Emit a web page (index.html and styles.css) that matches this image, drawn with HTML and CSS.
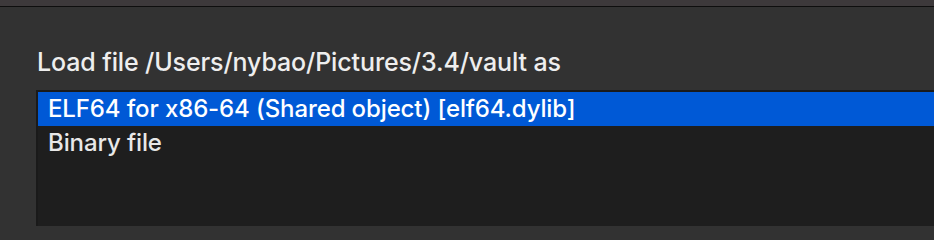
FILE: index.html
```html
<!DOCTYPE html>
<html>
<head>
<meta charset="utf-8">
<link rel="stylesheet" href="styles.css">
</head>
<body>
<div class="titlebar"></div>
<div class="panel">
  <div class="prompt">Load file /Users/nybao/Pictures/3.4/vault as</div>
  <div class="list">
    <div class="row selected">ELF64 for x86-64 (Shared object) [elf64.dylib]</div>
    <div class="row">Binary file</div>
  </div>
</div>
</body>
</html>
```

FILE: styles.css
```css
html, body {
  margin: 0;
  padding: 0;
  width: 934px;
  height: 228px;
  overflow: hidden;
  background: #323232;
  font-family: Inter, "Noto Sans", sans-serif;
  color: #ececec;
}
.titlebar {
  height: 6px;
  background: #3d393b;
  border-bottom: 1px solid #0e0e0e;
}
.panel {
  padding: 40px 0 0 37px;
}
.prompt {
  font-size: 25px;
  font-weight: 500;
  letter-spacing: -0.12px;
  line-height: 30px;
  height: 43px;
  color: #eeeeee;
}
.list {
  margin-left: -1px;
  border-top: 2px solid #1a1a1a;
  border-left: 2px solid #1a1a1a;
  background: #1e1e1e;
  height: 134px;
}
.row {
  height: 34px;
  line-height: 34px;
  font-size: 24px;
  font-weight: 500;
  letter-spacing: -0.12px;
  padding-left: 10px;
  color: #e8e8e8;
}
.row.selected {
  background: #0059d6;
  color: #ffffff;
}
```
